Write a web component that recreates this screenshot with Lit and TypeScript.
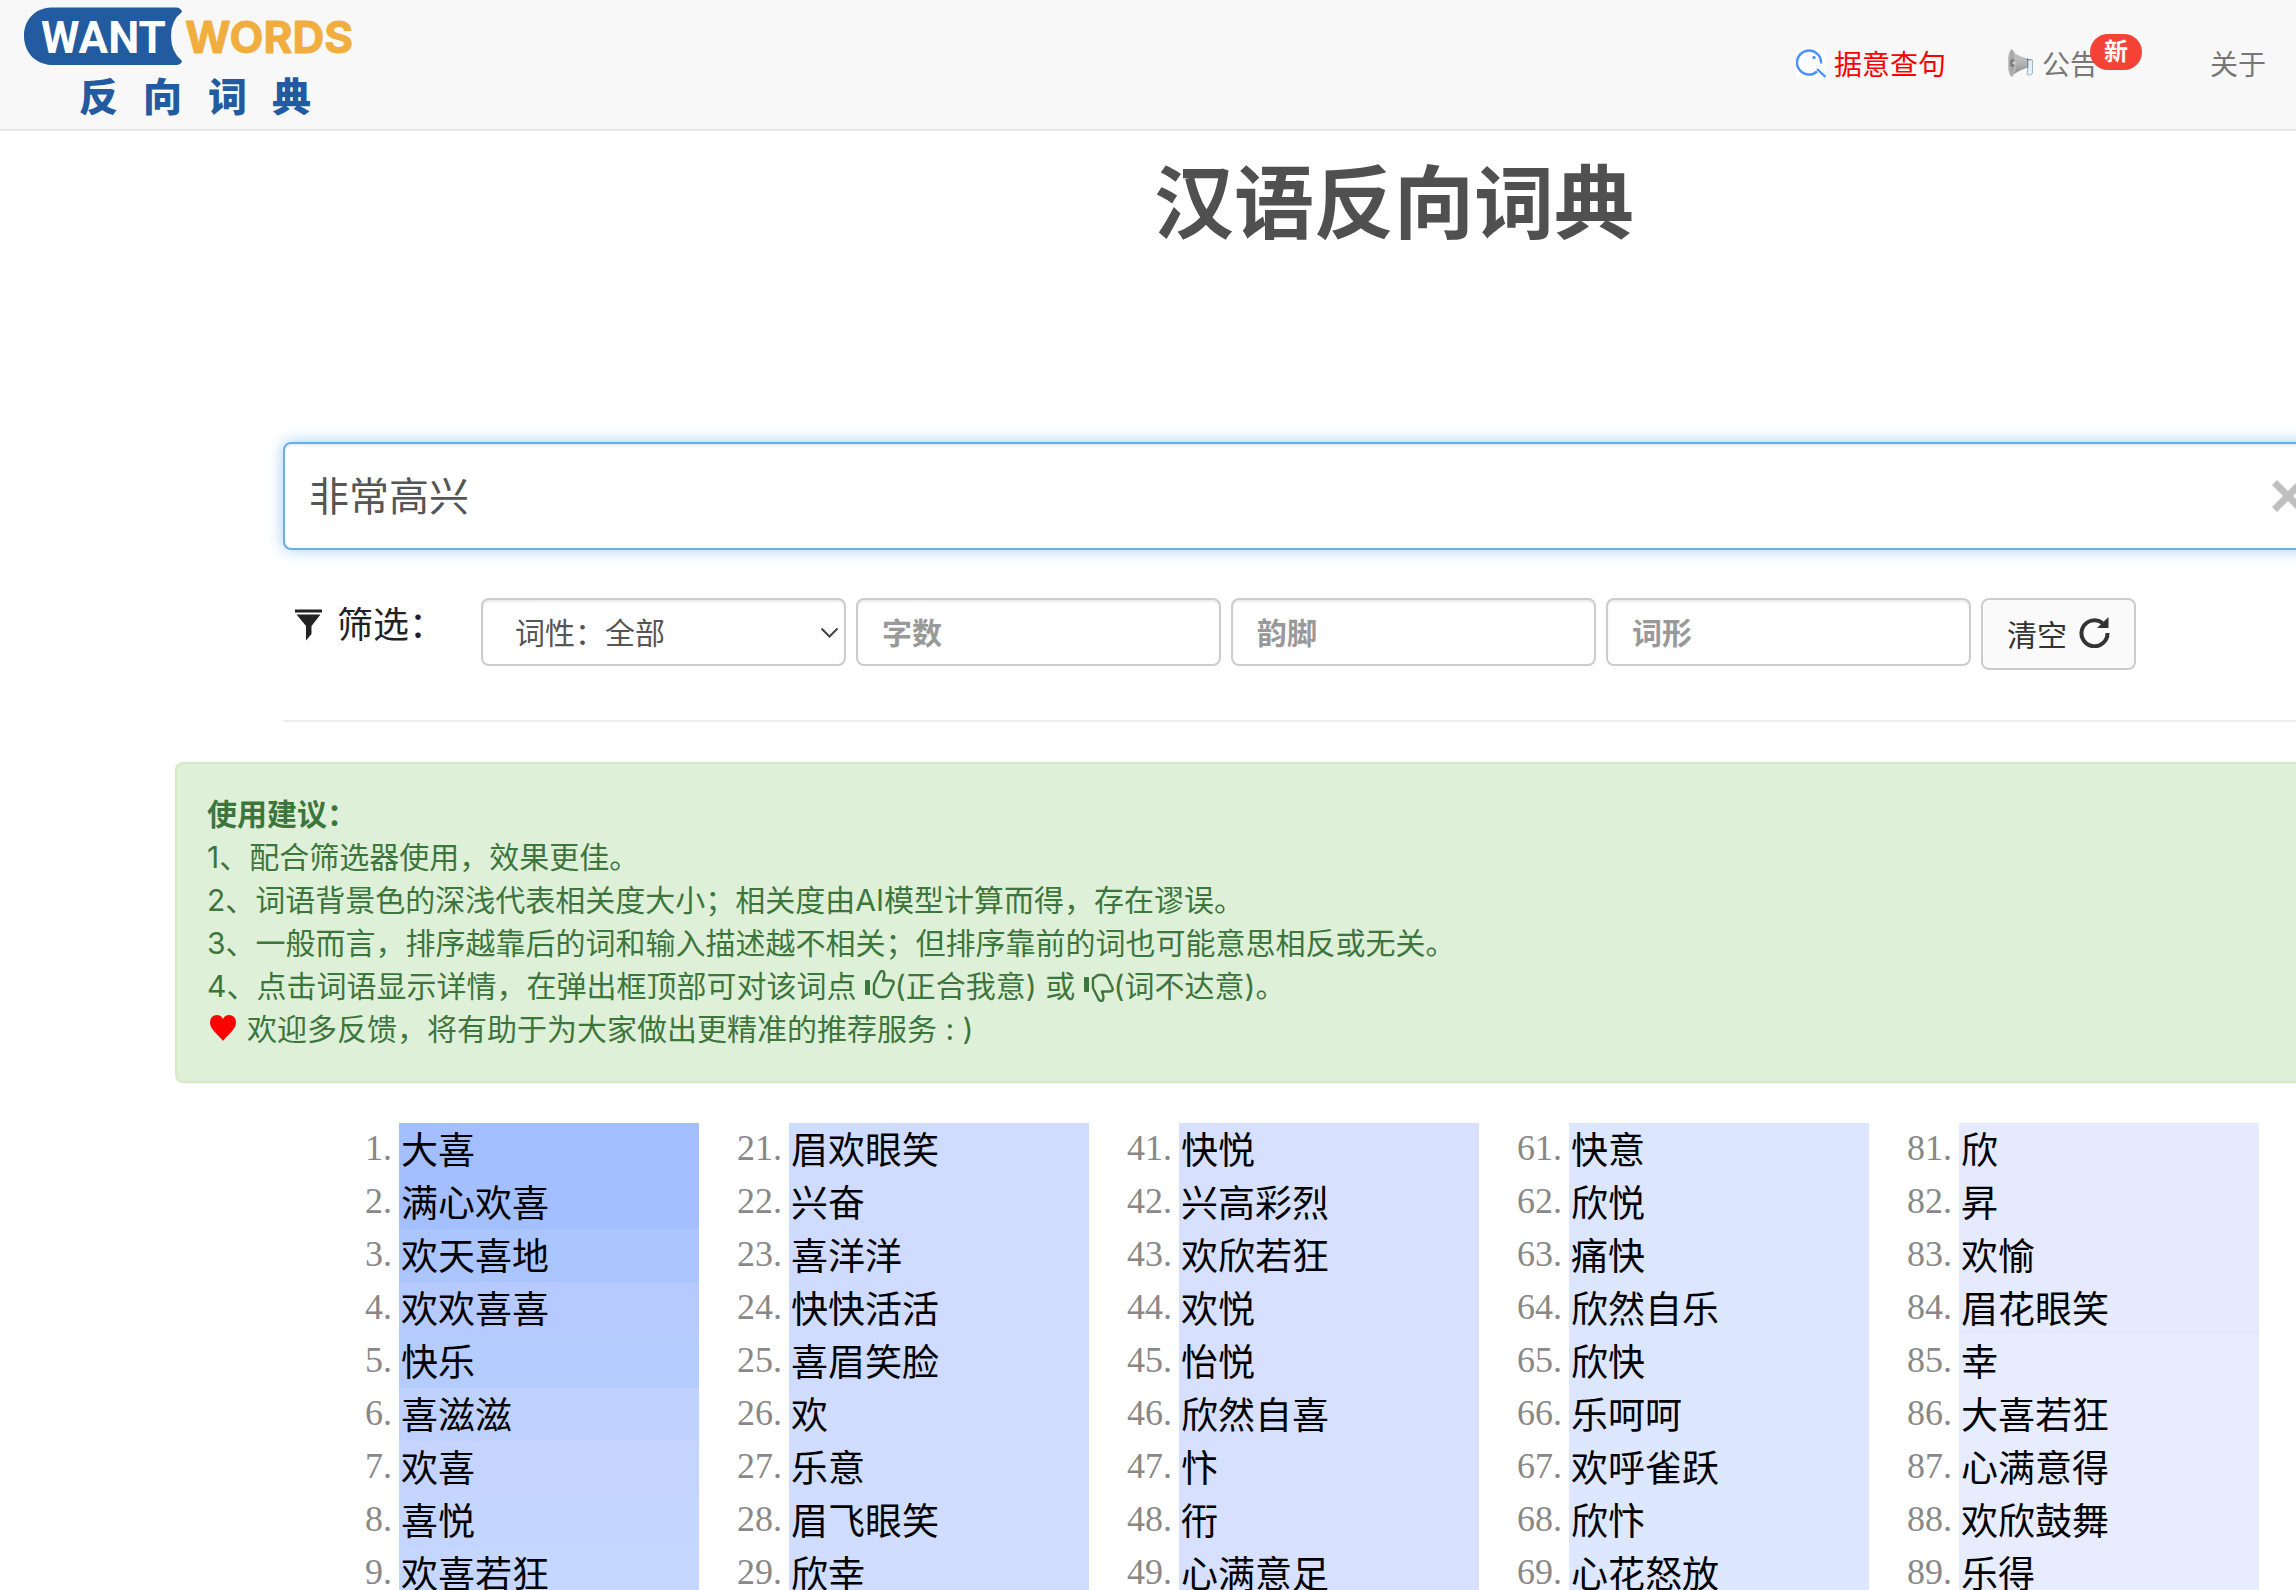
import { LitElement, html, css, svg } from "lit";
import { customElement, property, state } from "lit/decorators.js";
import { styleMap } from "lit/directives/style-map.js";

interface Entry {
  word: string;
  tone: string;
}

const COLUMNS: Entry[][] = [
  [
    { word: "大喜", tone: "#a3bfff" },
    { word: "满心欢喜", tone: "#a3bfff" },
    { word: "欢天喜地", tone: "#abc5ff" },
    { word: "欢欢喜喜", tone: "#b7caff" },
    { word: "快乐", tone: "#b5ccff" },
    { word: "喜滋滋", tone: "#bfd1ff" },
    { word: "欢喜", tone: "#c4d4ff" },
    { word: "喜悦", tone: "#c4d5ff" },
    { word: "欢喜若狂", tone: "#c5d7ff" },
  ],
  ["眉欢眼笑", "兴奋", "喜洋洋", "快快活活", "喜眉笑脸", "欢", "乐意", "眉飞眼笑", "欣幸"].map((word, i) => ({
    word,
    tone: i < 5 ? "#cfdbff" : "#d0ddff",
  })),
  ["快悦", "兴高彩烈", "欢欣若狂", "欢悦", "怡悦", "欣然自喜", "忭", "衎", "心满意足"].map((word) => ({
    word,
    tone: "#d7e1ff",
  })),
  ["快意", "欣悦", "痛快", "欣然自乐", "欣快", "乐呵呵", "欢呼雀跃", "欣忭", "心花怒放"].map((word, i) => ({
    word,
    tone: i < 6 ? "#dce6ff" : "#dde7ff",
  })),
  ["欣", "昇", "欢愉", "眉花眼笑", "幸", "大喜若狂", "心满意得", "欢欣鼓舞", "乐得"].map((word, i) => ({
    word,
    tone: i < 4 ? "#e5eaff" : "#e7edff",
  })),
];

const heart = svg`<path d="M14 27C10 21 1 16 1 8.500C1 4 4 1 8 1C10.600 1 13 2.500 14 5C15 2.500 17.400 1 20 1C24 1 27 4 27 8.500C27 16 18 21 14 27Z" fill="currentColor"/>`;

const thumb = svg`<rect x="0" y="10" width="5" height="15" rx="1" fill="currentColor"/>
  <path d="M9 14L14.500 3Q16.500 0 18.500 1.500Q20 3.500 19 7L18 10.500H25.500Q29.500 11 28.500 14L23.500 24.500Q22 27 19 27H14L9 23.500Z"
    fill="none" stroke="currentColor" stroke-width="2.400" stroke-linejoin="round"/>`;

@customElement("brand-logo")
export class BrandLogo extends LitElement {
  static styles = css`
    :host {
      display: block;
    }
    .logo {
      display: block;
    }
    .want {
      font: 700 44px Roboto, sans-serif;
      fill: #fff;
    }
    .words {
      font: 700 44px Inter, sans-serif;
      fill: #f1ae3f;
      stroke: #f1ae3f;
      stroke-width: 1px;
      stroke-linejoin: round;
    }
    .name {
      font: 900 39px "Noto Sans CJK SC", sans-serif;
      fill: #235ba0;
    }
  `;

  render() {
    return html`<svg class="logo" width="340" height="128" viewBox="0 0 340 128" role="img" aria-label="WantWords 反向词典">
      <path
        d="M27 7.500H152Q157 7.500 158 12Q147 20 147 36Q147 52 158 61Q157 65 152 65H27C11 64 0 52 0 36C0 20 11 8 27 7.500Z"
        fill="#235ba0"
      />
      <text class="want" x="17" y="53">WANT</text>
      <text class="words" x="161" y="53">WORDS</text>
      <text class="name" x="55 119 184 248" y="111">反向词典</text>
    </svg>`;
  }
}

@customElement("word-column")
export class WordColumn extends LitElement {
  @property({ attribute: false }) entries: Entry[] = [];
  @property({ type: Number }) start = 1;

  static styles = css`
    :host {
      display: block;
    }
    .list {
      margin: 0;
      padding: 0;
      list-style: none;
    }
    .item {
      display: grid;
      grid-template-columns: 90px 1fr;
      height: 53px;
      line-height: 50px;
    }
    .number {
      padding-right: 7px;
      text-align: right;
      color: #888;
      font-family: "Liberation Serif", serif;
      font-size: 36px;
      line-height: 51px;
    }
    .word {
      padding-left: 2px;
      color: #000;
      font-family: "Kaiti SC", KaiTi, "Noto Sans CJK SC", sans-serif;
      font-size: 37px;
      text-decoration: none;
      white-space: nowrap;
    }
  `;

  render() {
    return html`<ol class="list" start=${this.start}>
      ${this.entries.map(
        (entry, i) => html`<li class="item">
          <span class="number">${this.start + i}.</span>
          <a class="word" href="#" style=${styleMap({ backgroundColor: entry.tone })}>${entry.word}</a>
        </li>`
      )}
    </ol>`;
  }
}

@customElement("app-root")
export class AppRoot extends LitElement {
  @state() private query = "非常高兴";

  static styles = css`
    :host {
      display: block;
      overflow: hidden;
      height: 100vh;
      background: #fff;
      color: #222;
      font-family: Inter, "Noto Sans CJK SC", sans-serif;
      font-size: 30px;
    }
    * {
      box-sizing: border-box;
    }
    .header {
      display: flex;
      justify-content: space-between;
      height: 131px;
      padding: 0 30px 0 24px;
      background: #f8f8f8;
      border-bottom: 2px solid #e7e7e7;
    }
    .nav {
      display: flex;
      gap: 62px;
      height: 125px;
      align-items: center;
      font-size: 28px;
    }
    .link {
      position: relative;
      display: flex;
      align-items: center;
      gap: 8px;
      color: #777;
      text-decoration: none;
    }
    .link.notice {
      margin-right: 50px;
    }
    .link.hot {
      color: #f00;
    }
    .badge {
      position: absolute;
      left: 82px;
      top: -9px;
      width: 52px;
      height: 36px;
      border-radius: 18px;
      background: #f44336;
      color: #fff;
      font-size: 24px;
      font-weight: 700;
      line-height: 36px;
      text-align: center;
    }
    .main {
      width: calc(100% + 492px);
      padding: 0 175px;
    }
    .inner {
      padding: 0 108px;
    }
    .title {
      margin: 0;
      padding-top: 14px;
      color: #505050;
      font-size: 80px;
      font-weight: 700;
      line-height: 116px;
      text-align: center;
    }
    .search {
      position: relative;
      margin-top: 181px;
    }
    .query {
      display: block;
      width: 100%;
      height: 108px;
      padding: 0 24px 4px;
      border: 2px solid #66afe9;
      border-radius: 8px;
      outline: none;
      box-shadow: inset 0 2px 2px rgba(0, 0, 0, 0.075), 0 0 16px rgba(102, 175, 233, 0.6);
      color: #555;
      font: inherit;
      font-size: 40px;
    }
    .clear {
      position: absolute;
      right: 201px;
      top: 38px;
      width: 32px;
      height: 32px;
      padding: 0;
      border: 0;
      background: none;
      color: #bfbfbf;
    }
    .icon {
      display: block;
      flex: none;
    }
    .filters {
      display: flex;
      align-items: flex-start;
      gap: 10px;
      margin-top: 48px;
      padding-bottom: 50px;
      border-bottom: 2px solid #eee;
    }
    .legend {
      display: flex;
      align-items: center;
      gap: 15px;
      width: 188px;
      padding-left: 12px;
      font-size: 36px;
      line-height: 54px;
      white-space: nowrap;
    }
    .picker {
      position: relative;
      width: 365px;
    }
    .field {
      display: block;
      width: 365px;
      height: 68px;
      padding: 2px 24px 0;
      border: 2px solid #ccc;
      border-radius: 8px;
      background: #fff;
      box-shadow: inset 0 2px 2px rgba(0, 0, 0, 0.075);
      color: #555;
      font: inherit;
    }
    .field.select {
      padding: 2px 32px 0;
      appearance: none;
    }
    .field::placeholder {
      color: #999;
      font-weight: 700;
      opacity: 1;
    }
    .arrow {
      position: absolute;
      right: 7px;
      top: 29px;
      pointer-events: none;
    }
    .reset {
      display: flex;
      align-items: center;
      gap: 12px;
      height: 72px;
      padding: 0 24px 3px;
      border: 2px solid #ccc;
      border-radius: 8px;
      background: #fafafa;
      color: #333;
      font: inherit;
      white-space: nowrap;
    }
    .tips {
      margin-top: 40px;
      padding: 29px 30px 30px;
      border: 2px solid #d6e9c6;
      border-radius: 8px;
      background: #dff0d8;
      color: #3c763d;
      line-height: 43px;
    }
    .tip {
      display: flex;
      align-items: center;
      height: 43px;
      margin: 0;
      white-space: pre;
    }
    .lead {
      font-weight: 700;
    }
    .heart {
      margin: 0 10px 0 2px;
      color: #f00;
    }
    .flip {
      transform: scaleY(-1);
    }
    .results {
      display: grid;
      grid-template-columns: repeat(5, 1fr);
      margin-top: 40px;
      padding: 0 246px 0 26px;
    }
  `;

  private onInput(e: Event) {
    this.query = (e.target as HTMLInputElement).value;
  }

  render() {
    return html`
      <header class="header">
        <brand-logo></brand-logo>
        <nav class="nav">
          <a class="link hot" href="#">
            <svg class="icon" width="30" height="30" viewBox="0 0 30 30" aria-hidden="true">
              <rect width="30" height="30" fill="#fff" />
              <path d="M21 23.500A12 12 0 1 1 25 15.500M21 21L29.500 29" fill="none" stroke="#4a90ff" stroke-width="2.400" />
              <circle cx="18" cy="9.500" r="1.700" fill="#4a90ff" />
            </svg>
            据意查句
          </a>
          <a class="link notice" href="#">
            <svg class="icon" width="26" height="28" viewBox="0 0 26 28" aria-hidden="true">
              <defs>
                <linearGradient id="horn" x1="0" y1="0" x2="0" y2="1">
                  <stop offset="0" stop-color="#c9c9c9" />
                  <stop offset="0.500" stop-color="#b5b5b5" />
                  <stop offset="1" stop-color="#858585" />
                </linearGradient>
              </defs>
              <path d="M3 0.500Q7 6 19 9.500V19Q8 22 4 27.500Z" fill="url(#horn)" />
              <ellipse cx="3.800" cy="14" rx="3.500" ry="13.500" fill="#aaa" stroke="#c4c4c4" />
              <ellipse cx="4.500" cy="14" rx="2.200" ry="4" fill="#777" />
              <circle cx="6" cy="14" r="1.800" fill="#c8c8c8" />
              <path d="M19 9.500L25 11V18L19 19Z" fill="#555" />
              <path d="M20 11H24.500V24.500Q22 27.500 19 25.500L20 18Z" fill="#e3edf3" stroke="#9db7c6" />
            </svg>
            公告
            <span class="badge">新</span>
          </a>
          <a class="link" href="#">关于</a>
        </nav>
      </header>
      <main class="main">
        <div class="inner">
          <h1 class="title">汉语反向词典</h1>
          <div class="search">
            <input class="query" type="text" aria-label="描述" .value=${this.query} @input=${this.onInput} />
            <button class="clear" type="button" aria-label="清除" @click=${() => (this.query = "")}>
              <svg class="icon" width="32" height="32" viewBox="0 0 32 32" aria-hidden="true">
                <path d="M2.500 2.500L29.500 29.500M29.500 2.500L2.500 29.500" stroke="currentColor" stroke-width="7" />
              </svg>
            </button>
          </div>
          <div class="filters">
            <label class="legend" for="kind">
              <svg class="icon" width="27" height="32" viewBox="0 0 27 32" aria-hidden="true">
                <path d="M0 0.500H27V3.500H0ZM1.500 5.500H25.500L16.500 17V25L11 31.500V17Z" fill="currentColor" />
              </svg>
              筛选：
            </label>
            <div class="picker">
              <select class="field select" id="kind">
                <option>词性：全部</option>
              </select>
              <svg class="icon arrow" width="19" height="12" viewBox="0 0 19 12" aria-hidden="true">
                <path d="M1.500 1.500L9.500 9.500L17.500 1.500" fill="none" stroke="#444" stroke-width="2" />
              </svg>
            </div>
            <input class="field" type="text" placeholder="字数" aria-label="字数" />
            <input class="field" type="text" placeholder="韵脚" aria-label="韵脚" />
            <input class="field" type="text" placeholder="词形" aria-label="词形" />
            <button class="reset" type="button">
              清空
              <svg class="icon" width="31" height="31" viewBox="0 0 31 31" aria-hidden="true">
                <path d="M23.500 6A13 13 0 1 0 28.500 16" fill="none" stroke="currentColor" stroke-width="4" />
                <path d="M29.500 0V11H18Z" fill="currentColor" />
              </svg>
            </button>
          </div>
        </div>
        <section class="tips">
          <p class="tip lead">使用建议：</p>
          <p class="tip">1、配合筛选器使用，效果更佳。</p>
          <p class="tip">2、词语背景色的深浅代表相关度大小；相关度由AI模型计算而得，存在谬误。</p>
          <p class="tip">3、一般而言，排序越靠后的词和输入描述越不相关；但排序靠前的词也可能意思相反或无关。</p>
          <p class="tip"><span>4、点击词语显示详情，在弹出框顶部可对该词点 </span><svg class="icon" width="30" height="34" viewBox="0 0 30 34" aria-hidden="true">${thumb}</svg><span>(正合我意) 或 </span><svg class="icon flip" width="30" height="30" viewBox="0 0 30 30" aria-hidden="true">${thumb}</svg><span>(词不达意)。</span></p>
          <p class="tip"><svg class="icon heart" width="28" height="32" viewBox="0 0 28 32" aria-hidden="true">${heart}</svg><span>欢迎多反馈，将有助于为大家做出更精准的推荐服务 : )</span></p>
        </section>
        <div class="inner">
          <div class="results">
            ${COLUMNS.map(
              (entries, i) => html`<word-column .entries=${entries} .start=${i * 20 + 1}></word-column>`
            )}
          </div>
        </div>
      </main>
    `;
  }
}
